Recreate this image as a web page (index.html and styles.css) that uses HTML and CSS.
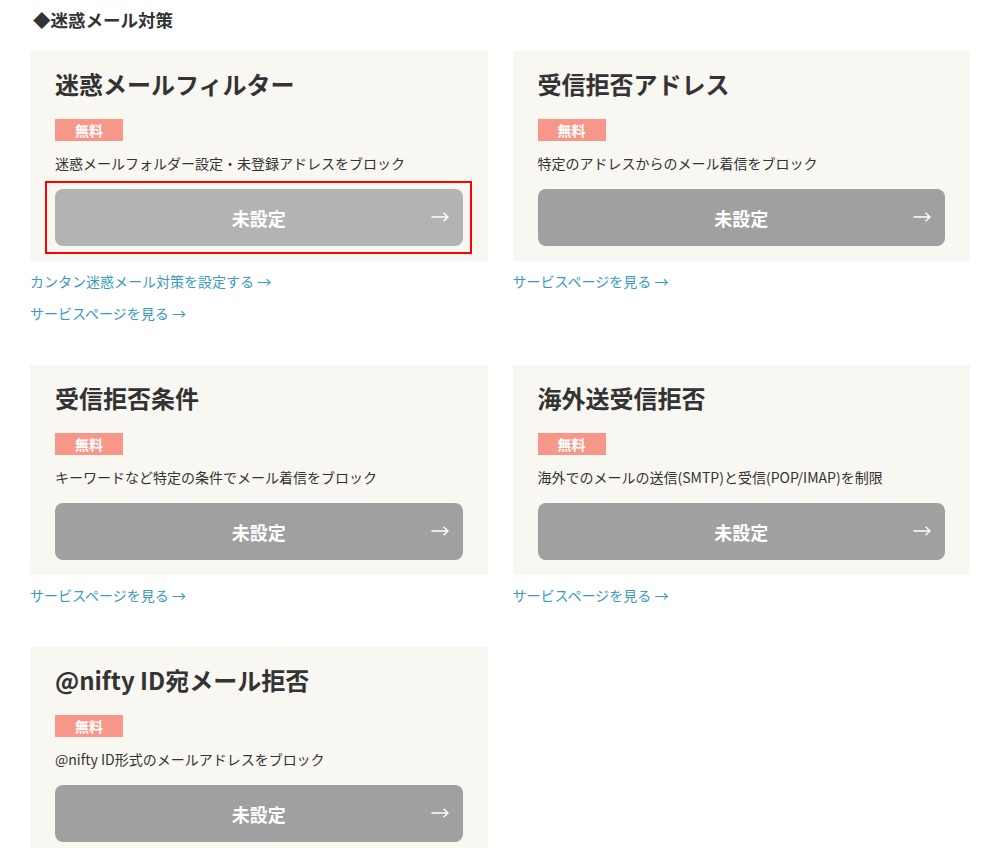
FILE: index.html
```html
<!DOCTYPE html>
<html lang="ja">
<head>
<meta charset="utf-8">
<title>迷惑メール対策</title>
<link rel="stylesheet" href="styles.css">
</head>
<body>
<div class="page">
  <h2 class="section-title">◆迷惑メール対策</h2>
  <div class="grid">
    <div class="item">
      <div class="card">
        <h3 class="card-title">迷惑メールフィルター</h3>
        <span class="badge">無料</span>
        <p class="desc">迷惑メールフォルダー設定・未登録アドレスをブロック</p>
        <a class="btn btn-focus" href="#">未設定<svg class="arrow" width="18" height="10" viewBox="0 0 18 10"><path d="M0.5 5H17M12.5 0.8L17 5L12.5 9.2" fill="none" stroke="#fff" stroke-width="1.4"/></svg></a>
      </div>
      <a class="link" href="#">カンタン迷惑メール対策を設定する →</a>
      <a class="link" href="#">サービスページを見る →</a>
    </div>
    <div class="item">
      <div class="card">
        <h3 class="card-title">受信拒否アドレス</h3>
        <span class="badge">無料</span>
        <p class="desc">特定のアドレスからのメール着信をブロック</p>
        <a class="btn" href="#">未設定<svg class="arrow" width="18" height="10" viewBox="0 0 18 10"><path d="M0.5 5H17M12.5 0.8L17 5L12.5 9.2" fill="none" stroke="#fff" stroke-width="1.4"/></svg></a>
      </div>
      <a class="link" href="#">サービスページを見る →</a>
    </div>
    <div class="item">
      <div class="card">
        <h3 class="card-title">受信拒否条件</h3>
        <span class="badge">無料</span>
        <p class="desc">キーワードなど特定の条件でメール着信をブロック</p>
        <a class="btn" href="#">未設定<svg class="arrow" width="18" height="10" viewBox="0 0 18 10"><path d="M0.5 5H17M12.5 0.8L17 5L12.5 9.2" fill="none" stroke="#fff" stroke-width="1.4"/></svg></a>
      </div>
      <a class="link" href="#">サービスページを見る →</a>
    </div>
    <div class="item">
      <div class="card">
        <h3 class="card-title">海外送受信拒否</h3>
        <span class="badge">無料</span>
        <p class="desc">海外でのメールの送信(SMTP)と受信(POP/IMAP)を制限</p>
        <a class="btn" href="#">未設定<svg class="arrow" width="18" height="10" viewBox="0 0 18 10"><path d="M0.5 5H17M12.5 0.8L17 5L12.5 9.2" fill="none" stroke="#fff" stroke-width="1.4"/></svg></a>
      </div>
      <a class="link" href="#">サービスページを見る →</a>
    </div>
    <div class="item">
      <div class="card">
        <h3 class="card-title">@nifty ID宛メール拒否</h3>
        <span class="badge">無料</span>
        <p class="desc">@nifty ID形式のメールアドレスをブロック</p>
        <a class="btn" href="#">未設定<svg class="arrow" width="18" height="10" viewBox="0 0 18 10"><path d="M0.5 5H17M12.5 0.8L17 5L12.5 9.2" fill="none" stroke="#fff" stroke-width="1.4"/></svg></a>
      </div>
    </div>
  </div>
</div>
</body>
</html>
```
FILE: styles.css
```css
html, body {
  margin: 0;
  padding: 0;
  background: #fff;
}
body {
  font-family: "Noto Sans CJK JP", "Noto Sans", sans-serif;
  color: #333;
}
.page {
  padding: 8px 26px 0 30px;
}
.section-title {
  margin: 0 0 19px 3px;
  font-size: 17.5px;
  line-height: 24px;
  font-weight: bold;
  color: #333;
}
.grid {
  display: grid;
  grid-template-columns: 1fr 1fr;
  column-gap: 25px;
  row-gap: 42px;
  align-items: start;
}
.item {
  display: flex;
  flex-direction: column;
  align-items: flex-start;
}
.card {
  align-self: stretch;
  background: #f8f7f2;
  padding: 15px 25px 15px 25px;
  display: flex;
  flex-direction: column;
  align-items: flex-start;
}
.card-title {
  margin: 0;
  font-size: 24px;
  line-height: 36px;
  font-weight: bold;
  color: #333;
}
.badge {
  margin-top: 17px;
  width: 68px;
  height: 22px;
  line-height: 22px;
  background: #f7978a;
  color: #fff;
  font-size: 14px;
  font-weight: bold;
  text-align: center;
}
.desc {
  margin: 12px 0 0 0;
  font-size: 14px;
  line-height: 21px;
  color: #333;
}
.btn {
  margin-top: 15px;
  align-self: stretch;
  height: 57px;
  border-radius: 8px;
  background: #a0a0a0;
  color: #fff;
  font-size: 18px;
  font-weight: bold;
  text-decoration: none;
  display: flex;
  align-items: center;
  justify-content: center;
  position: relative;
}
.btn-focus {
  background: #b3b3b3;
}
.btn-focus::after {
  content: "";
  position: absolute;
  top: -8px;
  bottom: -8px;
  left: -10px;
  right: -9px;
  border: 2px solid #ff0000;
  pointer-events: none;
}
.arrow {
  position: absolute;
  right: 14px;
  top: 23px;
}
.link {
  margin-top: 10px;
  font-size: 14px;
  line-height: 20px;
  color: #3a9bbf;
  text-decoration: none;
}
.link + .link {
  margin-top: 12px;
}
```
